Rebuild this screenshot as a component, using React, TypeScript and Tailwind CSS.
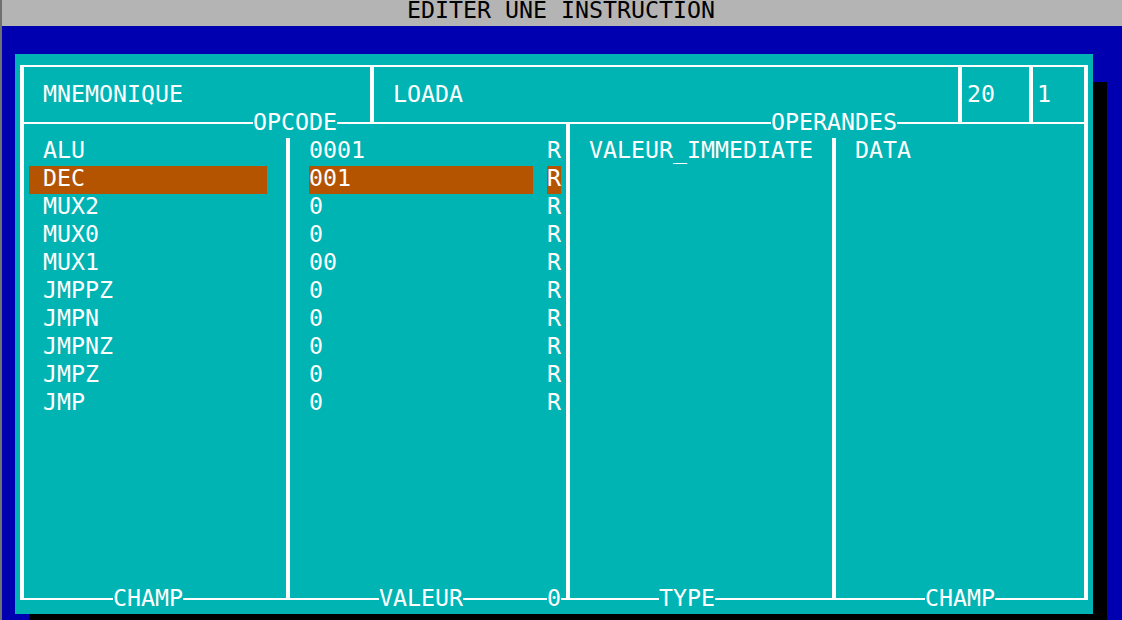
import React from "react";

const rows: { champ: string; valeur: string }[] = [
  { champ: "ALU", valeur: "0001" },
  { champ: "DEC", valeur: "001" },
  { champ: "MUX2", valeur: "0" },
  { champ: "MUX0", valeur: "0" },
  { champ: "MUX1", valeur: "00" },
  { champ: "JMPPZ", valeur: "0" },
  { champ: "JMPN", valeur: "0" },
  { champ: "JMPNZ", valeur: "0" },
  { champ: "JMPZ", valeur: "0" },
  { champ: "JMP", valeur: "0" },
];

const SELECTED = 1;

export default function App() {
  return (
    <div className="w-[1122px] h-[620px] overflow-hidden border-l-2 border-[#707070] bg-[#0000b0] text-white font-['DejaVu_Sans_Mono',monospace] text-[23.25px] whitespace-pre">
      {/* Title bar */}
      <div className="h-[26px] bg-[#b4b4b4] text-black text-center leading-[20px] pr-[2px]">
        EDITER UNE INSTRUCTION
      </div>

      {/* Blue desktop */}
      <div className="pt-[28px] pl-[13px]">
        {/* Teal window with shadow */}
        <div className="w-[1078px] h-[560px] bg-[#00b4b4] shadow-[14px_28px_0_0_#000] pt-[11px] pl-[5px]">
          <div className="w-[1068px] h-[535px] border-t-2 border-x-4 border-white flex flex-col">
            {/* Header */}
            <div className="flex h-[55px] leading-[24px]">
              <div className="w-[346px] pl-[19px] pt-[15px]">MNEMONIQUE</div>
              <div className="w-[588px] border-l-4 border-white pl-[19px] pt-[15px]">LOADA</div>
              <div className="w-[71px] border-l-4 border-white pl-[5px] pt-[15px]">20</div>
              <div className="flex-1 border-l-4 border-white pl-[4px] pt-[15px]">1</div>
            </div>

            {/* Separator with labels */}
            <div className="relative h-[2px] bg-white">
              <span className="absolute top-[-12px] left-[229px] bg-[#00b4b4] leading-[24px]">OPCODE</span>
              <span className="absolute top-[-12px] left-[747px] bg-[#00b4b4] leading-[24px]">OPERANDES</span>
            </div>

            {/* Body */}
            <div className="flex h-[474px]">
              <div className="w-[262px] pt-[14px]">
                {rows.map((r, i) => (
                  <div
                    key={r.champ}
                    className={
                      "ml-[5px] w-[238px] pl-[14px] h-[28px] leading-[24px] " +
                      (i === SELECTED ? "bg-[#b45400]" : "")
                    }
                  >
                    {r.champ}
                  </div>
                ))}
              </div>
              <div className="w-[4px] mt-[14px] bg-white" />
              <div className="w-[276px] pt-[14px] pl-[19px]">
                {rows.map((r, i) => (
                  <div key={r.champ} className="flex h-[28px] leading-[24px]">
                    <div className={"w-[224px] h-[28px] " + (i === SELECTED ? "bg-[#b45400]" : "")}>
                      {r.valeur}
                    </div>
                    <div className="w-[14px]" />
                    <div className={"w-[14px] h-[28px] " + (i === SELECTED ? "bg-[#b45400]" : "")}>R</div>
                  </div>
                ))}
              </div>
              <div className="w-[4px] bg-white" />
              <div className="w-[262px] pt-[14px] pl-[19px] leading-[24px]">VALEUR_IMMEDIATE</div>
              <div className="w-[4px] mt-[14px] bg-white" />
              <div className="flex-1 pt-[14px] pl-[19px] leading-[24px]">DATA</div>
            </div>

            {/* Bottom line with labels */}
            <div className="relative h-[2px] bg-white">
              <span className="absolute top-[-12px] left-[89px] bg-[#00b4b4] leading-[24px]">CHAMP</span>
              <span className="absolute top-[-12px] left-[355px] bg-[#00b4b4] leading-[24px]">VALEUR</span>
              <span className="absolute top-[-12px] left-[523px] bg-[#00b4b4] leading-[24px]">0</span>
              <span className="absolute top-[-12px] left-[635px] bg-[#00b4b4] leading-[24px]">TYPE</span>
              <span className="absolute top-[-12px] left-[901px] bg-[#00b4b4] leading-[24px]">CHAMP</span>
            </div>
          </div>
        </div>
      </div>
    </div>
  );
}
